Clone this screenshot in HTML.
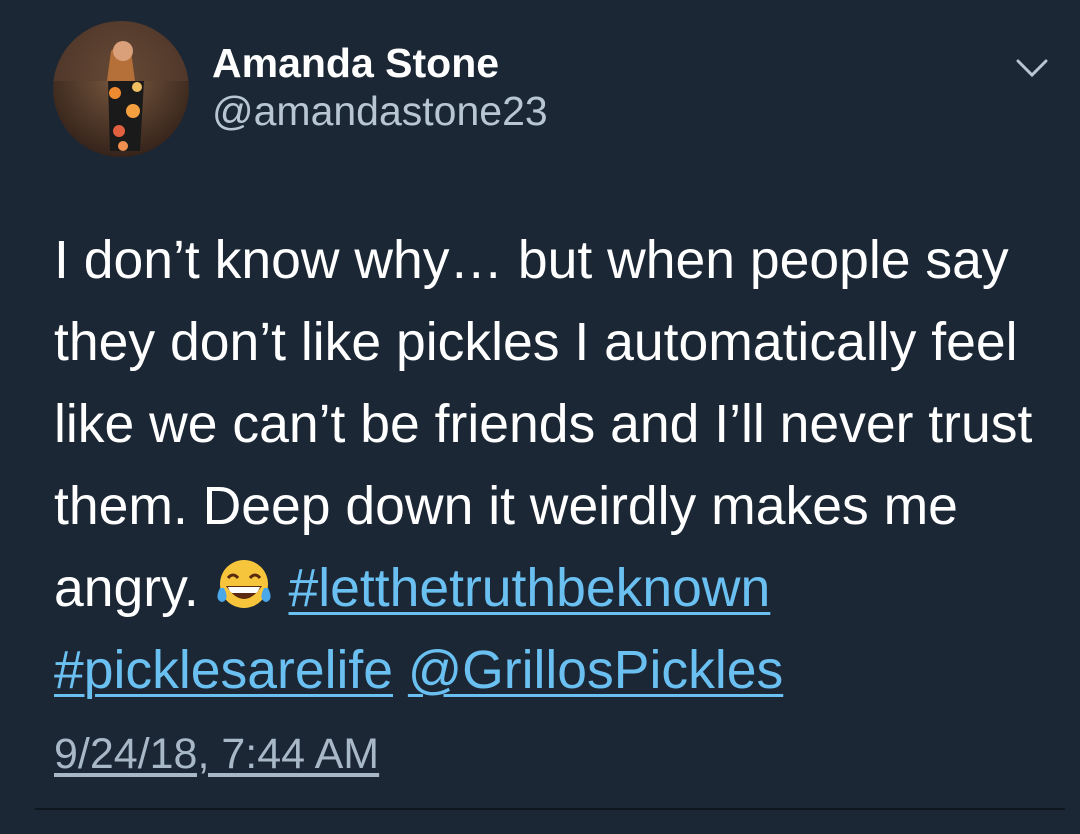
<!DOCTYPE html>
<html><head><meta charset="utf-8"><style>
body{margin:0;width:1080px;height:834px;background:#1b2735;overflow:hidden;font-family:"Liberation Sans",Arial,sans-serif;position:relative}
.l{position:absolute;left:54px;font-size:53.5px;color:#fff;white-space:nowrap;line-height:1}
.a{color:#6bc0f2;text-decoration:underline;text-decoration-thickness:3px;text-underline-offset:6px}
</style></head><body>
<svg style="position:absolute;left:53px;top:21px" width="136" height="136">
<defs><clipPath id="c"><circle cx="68" cy="68" r="68"/></clipPath>
<radialGradient id="g" cx="0.5" cy="0.4" r="0.7"><stop offset="0" stop-color="#7a5a40"/><stop offset="1" stop-color="#2a1a14"/></radialGradient></defs>
<g clip-path="url(#c)">
<rect width="136" height="136" fill="url(#g)"/>
<rect x="0" y="0" width="136" height="60" fill="#5a4030" opacity=".6"/>
<path d="M58 30 q10-12 20 0 l4 30 -28 0z" fill="#b5703a"/>
<circle cx="70" cy="30" r="10" fill="#d9a07a"/>
<path d="M55 60 h36 l-4 70 h-30z" fill="#1a1a1a"/>
<circle cx="62" cy="72" r="6" fill="#f08a30"/><circle cx="80" cy="90" r="7" fill="#f5a040"/><circle cx="66" cy="110" r="6" fill="#e06040"/><circle cx="84" cy="66" r="5" fill="#f0c060"/><circle cx="70" cy="125" r="5" fill="#f09050"/>
</g></svg>
<div style="position:absolute;left:212px;top:40px;font-size:41px;font-weight:bold;color:#fff">Amanda Stone</div>
<div style="position:absolute;left:212px;top:88px;font-size:41px;color:#b8c6d4">@amandastone23</div>
<svg style="position:absolute;left:1016px;top:58px" width="32" height="20"><path d="M2 3 L16 17 L30 3" fill="none" stroke="#b8c6d4" stroke-width="3" stroke-linecap="round"/></svg>
<div class="l" style="top:234px">I don’t know why… but when people say</div>
<div class="l" style="top:316px">they don’t like pickles I automatically feel</div>
<div class="l" style="top:398px">like we can’t be friends and I’ll never trust</div>
<div class="l" style="top:480px">them. Deep down it weirdly makes me</div>
<div class="l" style="top:562px">angry. <span style="display:inline-block;width:60px;height:50px;vertical-align:-6px;position:relative"><svg width="60" height="56" style="position:absolute;top:-4px"><circle cx="30" cy="26" r="24" fill="#f7c53c"/><path d="M12 28 q18 26 36 0z" fill="#5a2a10"/><path d="M14 29 h32 q-2 5 -4 6 h-24 q-3-2 -4-6z" fill="#fff"/><path d="M14 20 q5-6 10 0 M36 20 q5-6 10 0" stroke="#5a2a10" stroke-width="3" fill="none"/><path d="M6 30 q-6 12 2 14 q8-2 2-14z M54 30 q6 12 -2 14 q-8-2 -2-14z" fill="#4aa8e8"/></svg></span> <span class="a">#letthetruthbeknown</span></div>
<div class="l" style="top:644px"><span class="a">#picklesarelife</span> <span class="a">@GrillosPickles</span></div>
<div style="position:absolute;left:54px;top:730px;font-size:43px;color:#a9b8c6;text-decoration:underline;text-underline-offset:5px">9/24/18, 7:44 AM</div>
<div style="position:absolute;left:35px;top:808px;width:1030px;height:2px;background:#0e1620"></div>
</body></html>
